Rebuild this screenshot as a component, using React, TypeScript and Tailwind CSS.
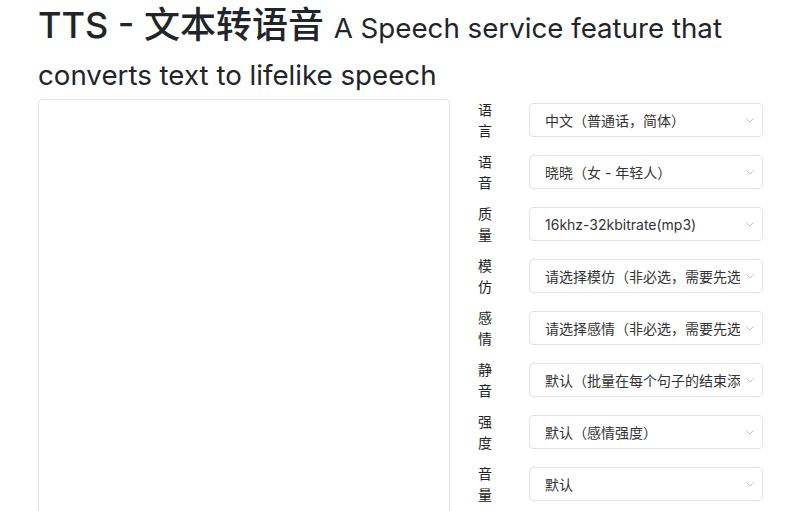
import React from "react";

const fields: { label: string; value: string }[] = [
  { label: "语言", value: "中文（普通话，简体）" },
  { label: "语音", value: "晓晓（女 - 年轻人）" },
  { label: "质量", value: "16khz-32kbitrate(mp3)" },
  { label: "模仿", value: "请选择模仿（非必选，需要先选择语音）" },
  { label: "感情", value: "请选择感情（非必选，需要先选择语音）" },
  { label: "静音", value: "默认（批量在每个句子的结束添加静音）" },
  { label: "强度", value: "默认（感情强度）" },
  { label: "音量", value: "默认" },
];

function Chevron() {
  return (
    <svg width="8" height="5" viewBox="0 0 8 5" fill="none" className="shrink-0">
      <path d="M0.5 0.5l3.5 3.5L7.5 0.5" stroke="#c2c2c2" strokeWidth="1" />
    </svg>
  );
}

export default function App() {
  return (
    <div
      className="w-[800px] h-[511px] overflow-hidden bg-white text-[#212529] px-[38px] pt-[3px]"
      style={{ fontFamily: 'Inter, "Noto Sans CJK SC", sans-serif' }}
    >
      <h1 className="text-[36px] leading-[44px] font-medium">
        TTS - 文本转语音{" "}
        <span className="text-[27.7px] font-normal">
          A Speech service feature that converts text to lifelike speech
        </span>
      </h1>
      <div className="flex mt-[2px]">
        <div className="w-[412px] h-[500px] shrink-0 border border-[#e3e3e3] rounded-[4px] bg-white" />
        <div className="flex flex-col gap-[10px] ml-[28px]">
          {fields.map((f) => (
            <div key={f.label} className="flex items-center">
              <div className="w-[14px] text-[14px] leading-[21px] text-[#222] break-all">
                {f.label}
              </div>
              <div className="ml-[37px] w-[234px] h-[34px] border border-[#e3e3e3] rounded-[4px] flex items-center pl-[15px] pr-[8px]">
                <span className="flex-1 overflow-hidden whitespace-nowrap text-[14px] text-[#333] mr-[6px]">
                  {f.value}
                </span>
                <Chevron />
              </div>
            </div>
          ))}
        </div>
      </div>
    </div>
  );
}
